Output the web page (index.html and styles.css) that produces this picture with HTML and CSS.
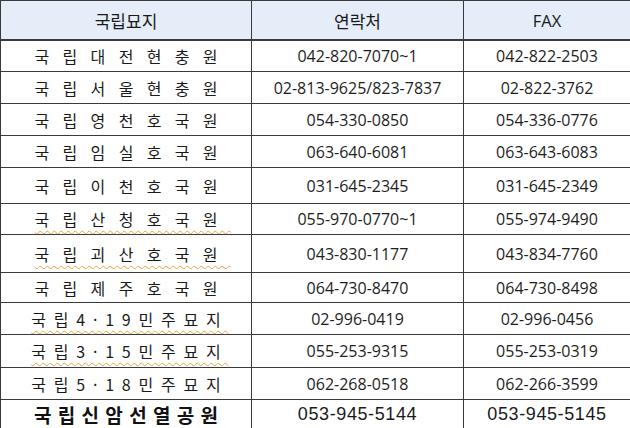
FILE: index.html
```html
<!DOCTYPE html>
<html lang="ko">
<head>
<meta charset="utf-8">
<link rel="stylesheet" href="styles.css">
</head>
<body>
<table class="grid">
  <colgroup><col class="c1"><col class="c2"><col class="c3"></colgroup>
  <thead>
    <tr class="head"><th>국립묘지</th><th>연락처</th><th class="latin">FAX</th></tr>
  </thead>
  <tbody>
    <tr class="h31"><td class="name">국립대전현충원</td><td>042-820-7070~1</td><td>042-822-2503</td></tr>
    <tr class="h32"><td class="name">국립서울현충원</td><td>02-813-9625/823-7837</td><td>02-822-3762</td></tr>
    <tr class="h32"><td class="name">국립영천호국원</td><td>054-330-0850</td><td>054-336-0776</td></tr>
    <tr class="h32"><td class="name">국립임실호국원</td><td>063-640-6081</td><td>063-643-6083</td></tr>
    <tr class="h36"><td class="name">국립이천호국원</td><td>031-645-2345</td><td>031-645-2349</td></tr>
    <tr class="h31"><td class="name"><span class="spell">국립산청호국원</span></td><td>055-970-0770~1</td><td>055-974-9490</td></tr>
    <tr class="h38"><td class="name"><span class="spell">국립괴산호국원</span></td><td>043-830-1177</td><td>043-834-7760</td></tr>
    <tr class="h30"><td class="name">국립제주호국원</td><td>064-730-8470</td><td>064-730-8498</td></tr>
    <tr class="h32"><td class="name mixed"><span class="spell">국립4·19민주묘지</span></td><td>02-996-0419</td><td>02-996-0456</td></tr>
    <tr class="h33"><td class="name mixed"><span class="spell">국립3·15민주묘지</span></td><td>055-253-9315</td><td>055-253-0319</td></tr>
    <tr class="h32"><td class="name mixed">국립5·18민주묘지</td><td>062-268-0518</td><td>062-266-3599</td></tr>
    <tr class="h29 last"><td class="name big">국립신암선열공원</td><td class="gul">053-945-5144</td><td class="gul">053-945-5145</td></tr>
  </tbody>
</table>
</body>
</html>
```
FILE: styles.css
```css
html, body {
  margin: 0;
  padding: 0;
  background: #ffffff;
}
.grid {
  border-collapse: collapse;
  width: 630px;
  table-layout: fixed;
  font-family: "Open Sans", "Noto Sans CJK KR", sans-serif;
  color: #1e1e1e;
}
.c1 { width: 251px; }
.c2 { width: 212px; }
.c3 { width: 167px; }
.grid th, .grid td {
  border: 1px solid #3a3a3a;
  padding: 0;
  text-align: center;
  vertical-align: middle;
  font-size: 16px;
  font-weight: 400;
  white-space: nowrap;
}
.head th {
  height: 38px;
  background: #e4edf8;
  font-family: "Noto Sans CJK KR", "Open Sans", sans-serif;
  font-size: 17px;
  color: #1a1a1a;
  border-bottom: 2px solid #3a3a3a;
}
.head th.latin { font-family: "Open Sans", sans-serif; font-size: 16.5px; }
.h29 td { height: 28px; }
.h30 td { height: 29px; }
.h31 td { height: 30px; }
.h32 td { height: 31px; }
.h33 td { height: 32px; }
.h36 td { height: 35px; }
.h38 td { height: 37px; }
.grid td.name {
  font-family: "Noto Sans CJK KR", sans-serif;
  font-size: 16px;
  letter-spacing: 13.3px;
  text-indent: 13.3px;
  color: #1a1a1a;
}
.grid td.mixed { letter-spacing: 7.8px; text-indent: 7.8px; }
.spell {
  text-decoration: underline wavy #e0a341;
  text-decoration-thickness: 1px;
  text-underline-offset: 4px;
}
.grid td.big {
  font-size: 19px;
  font-weight: 700;
  letter-spacing: 6.3px;
  text-indent: 6.3px;
  color: #111;
}
.grid td.gul {
  font-family: "Liberation Sans", sans-serif;
  font-size: 18px;
  letter-spacing: 0.6px;
  color: #1a1a1a;
}
```
